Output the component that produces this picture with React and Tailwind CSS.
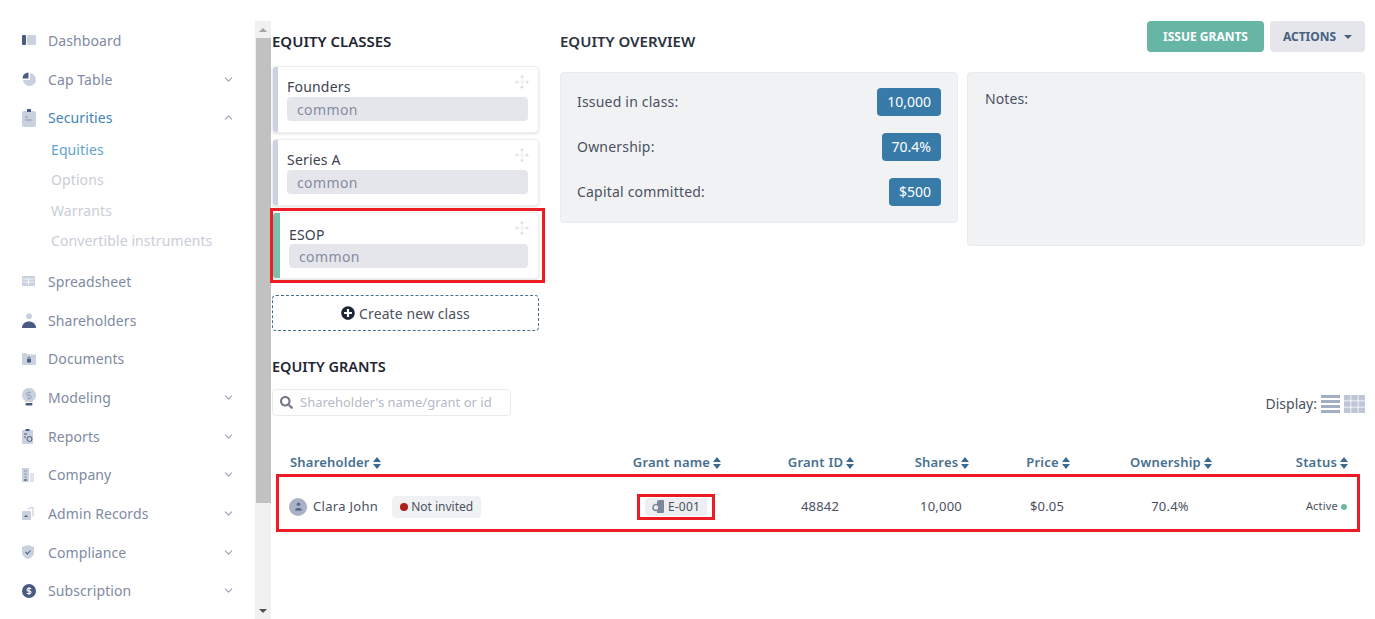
import { ChevronDown, ChevronUp, User } from 'lucide-react';
import { FaPlusCircle, FaSearch } from 'react-icons/fa';

const NAVY = '#4a5a82';
const LIGHT = '#c9d0de';

function DashboardIcon() {
  return (
    <svg width="14" height="10" viewBox="0 0 14 10">
      <rect x="0" y="0" width="4" height="10" rx="1" fill={NAVY} />
      <rect x="5" y="0" width="9" height="10" rx="1" fill={LIGHT} />
    </svg>
  );
}

function PieIcon() {
  return (
    <svg width="15" height="15" viewBox="0 0 15 15">
      <path d="M8 1a6.5 6.5 0 1 1-7 7h7z" fill={LIGHT} />
      <path d="M6.5 0.5v6H0.5a6 6 0 0 1 6-6z" fill={NAVY} />
    </svg>
  );
}

function ClipboardIcon() {
  return (
    <svg width="14" height="18" viewBox="0 0 14 18">
      <rect x="0" y="2" width="14" height="16" rx="2" fill={LIGHT} />
      <rect x="5" y="0" width="4" height="3" fill={NAVY} />
      <path d="M3 8h3M3 11h7" stroke="#8f9ab3" strokeWidth="1" />
    </svg>
  );
}

function SheetIcon() {
  return (
    <svg width="13" height="10" viewBox="0 0 13 10">
      <rect width="13" height="10" rx="1" fill={LIGHT} />
      <path d="M1 3h11M1 6h11M6.5 3v6" stroke="#fff" strokeWidth="0.8" />
    </svg>
  );
}

function PersonIcon() {
  return (
    <svg width="14" height="15" viewBox="0 0 14 15">
      <circle cx="7" cy="3.2" r="3" fill={LIGHT} />
      <path d="M0 15c0-4 3-6.5 7-6.5s7 2.500 7 6.500z" fill={NAVY} />
    </svg>
  );
}

function FolderIcon() {
  return (
    <svg width="14" height="12" viewBox="0 0 14 12">
      <path d="M0 1a1 1 0 0 1 1-1h3l1.500 1.500H13a1 1 0 0 1 1 1V11a1 1 0 0 1-1 1H1a1 1 0 0 1-1-1z" fill={LIGHT} />
      <rect x="5" y="6" width="4" height="3.500" rx="0.5" fill={NAVY} />
      <path d="M6 6V5a1 1 0 0 1 2 0v1" stroke={NAVY} fill="none" strokeWidth="0.8" />
    </svg>
  );
}

function BulbIcon() {
  return (
    <svg width="14" height="18" viewBox="0 0 14 18">
      <path d="M7 0a7 7 0 0 1 4 12.700V14H3v-1.300A7 7 0 0 1 7 0z" fill={LIGHT} />
      <rect x="3.500" y="15" width="7" height="2.500" rx="1" fill={NAVY} />
      <path d="M9 4.500H6a1.200 1.200 0 0 0 0 3h2a1.200 1.200 0 0 1 0 3H5M7 3v9" stroke="#97a2ba" strokeWidth="0.8" fill="none" />
    </svg>
  );
}

function ReportIcon() {
  return (
    <svg width="12" height="15" viewBox="0 0 12 15">
      <rect y="1" width="11" height="14" rx="1" fill={LIGHT} />
      <rect x="3.500" y="0" width="4" height="2" fill={NAVY} />
      <path d="M2 5h3M2 8h2" stroke={NAVY} strokeWidth="1" />
      <circle cx="7.500" cy="10" r="2.500" fill="none" stroke={NAVY} strokeWidth="1" />
    </svg>
  );
}

function BuildingIcon() {
  return (
    <svg width="12" height="14" viewBox="0 0 12 14">
      <rect x="0" y="0" width="7" height="14" fill={LIGHT} />
      <rect x="8" y="5" width="4" height="9" fill="#dfe3ec" />
      <path d="M2 3h3M2 6h3M2 9h3" stroke="#8f9ab3" strokeWidth="1" />
      <rect x="2.500" y="11" width="2" height="2" fill={NAVY} />
    </svg>
  );
}

function AdminIcon() {
  return (
    <svg width="12" height="13" viewBox="0 0 12 13">
      <path d="M7 2.500a4 1.500 0 0 1 4-2v9" stroke={LIGHT} fill="none" strokeWidth="1.200" />
      <rect x="0" y="4" width="9" height="9" rx="1" fill={LIGHT} />
      <path d="M2 10l2-2 2 2z" fill={NAVY} />
    </svg>
  );
}

function ShieldIcon() {
  return (
    <svg width="12" height="14" viewBox="0 0 12 14">
      <path d="M6 0l6 2v5c0 3.500-2.500 5.800-6 7-3.500-1.200-6-3.500-6-7V2z" fill={LIGHT} />
      <path d="M3.500 7l2 2 3-3.500" stroke={NAVY} fill="none" strokeWidth="1.100" />
    </svg>
  );
}

function DollarIcon() {
  return (
    <svg width="14" height="14" viewBox="0 0 14 14">
      <circle cx="7" cy="7" r="7" fill={NAVY} />
      <path d="M9.300 4.500H6a1.300 1.300 0 0 0 0 2.500h2a1.300 1.300 0 0 1 0 2.500H4.700M7 3v8" stroke="#fff" strokeWidth="1.100" fill="none" />
    </svg>
  );
}

function MoveIcon() {
  return (
    <svg width="14" height="14" viewBox="0 0 14 14" fill="#d5d9e2">
      <path d="M7 0l2 2.500H5zM7 14l-2-2.500h4zM0 7l2.500-2v4zM14 7l-2.500 2V5z" />
      <path d="M6.500 3h1v8h-1zM3 6.500h8v1H3z" opacity="0.5" />
    </svg>
  );
}

function SortIcon() {
  return (
    <svg width="8" height="12" viewBox="0 0 8 12" fill="#3a6a8f" className="ml-[3px]">
      <path d="M4 0l4 5H0zM4 12L0 7h8z" />
    </svg>
  );
}

function ListIcon() {
  return (
    <svg width="19" height="18" viewBox="0 0 19 18" fill="#a3aec3">
      <rect y="0" width="19" height="3" />
      <rect y="5" width="19" height="3" />
      <rect y="10" width="19" height="3" />
      <rect y="15" width="19" height="3" />
    </svg>
  );
}

function GridIcon() {
  return (
    <svg width="21" height="18" viewBox="0 0 21 18" fill="#bfc6d6">
      {[0, 7.25, 14.5].map((x) =>
        [0, 6.25, 12.5].map((y) => <rect key={`${x}-${y}`} x={x} y={y} width="6.5" height="5.5" rx="0.5" />)
      )}
    </svg>
  );
}

function GrantIcon() {
  return (
    <svg width="13" height="13" viewBox="0 0 13 13">
      <path d="M5 1l2-1h4a1 1 0 0 1 1 1v11a1 1 0 0 1-1 1H5z" fill="#7d8798" />
      <circle cx="4" cy="7.500" r="3" fill="#eceef1" stroke="#7d8798" strokeWidth="1.500" />
    </svg>
  );
}

const navTop = [
  { label: 'Dashboard', icon: <DashboardIcon /> },
  { label: 'Cap Table', icon: <PieIcon />, chevron: 'down' },
  { label: 'Securities', icon: <ClipboardIcon />, chevron: 'up', active: true },
];

const subNav = ['Equities', 'Options', 'Warrants', 'Convertible instruments'];

const navBottom = [
  { label: 'Spreadsheet', icon: <SheetIcon /> },
  { label: 'Shareholders', icon: <PersonIcon /> },
  { label: 'Documents', icon: <FolderIcon /> },
  { label: 'Modeling', icon: <BulbIcon />, chevron: 'down' },
  { label: 'Reports', icon: <ReportIcon />, chevron: 'down' },
  { label: 'Company', icon: <BuildingIcon />, chevron: 'down' },
  { label: 'Admin Records', icon: <AdminIcon />, chevron: 'down' },
  { label: 'Compliance', icon: <ShieldIcon />, chevron: 'down' },
  { label: 'Subscription', icon: <DollarIcon />, chevron: 'down' },
];

function NavRow({ item }) {
  return (
    <div className="flex h-[38.7px] items-center pl-[22px] pr-[20px]">
      <span className="flex w-[26px] shrink-0 items-center">{item.icon}</span>
      <span className={`flex-1 text-[14px] tracking-[0.1px] ${item.active ? 'text-[#3f85b5]' : 'text-[#7f8aa3]'}`}>
        {item.label}
      </span>
      {item.chevron === 'down' && <ChevronDown size={13} className="text-[#9aa3b5]" />}
      {item.chevron === 'up' && <ChevronUp size={13} className="text-[#9aa3b5]" />}
    </div>
  );
}

function ClassCard({ name, active }) {
  return (
    <div className="relative flex h-[67px] overflow-hidden rounded border border-[#eceef2] bg-white shadow-sm">
      <div className={`h-full shrink-0 ${active ? 'w-[7px] bg-[#7cc0ae]' : 'w-[5px] bg-[#ccd2de]'}`} />
      <div className={`flex-1 pr-[10px] ${active ? 'pl-[9px] pt-[13px]' : 'pl-[9px] pt-[11px]'}`}>
        <div className="text-[14px] leading-[17px] tracking-[0.2px] text-[#3c4250]">{name}</div>
        <div className={`flex h-[24px] items-center rounded bg-[#e4e6ec] px-[10px] text-[14px] tracking-[0.4px] text-[#858ca0] ${active ? 'mt-[1px]' : 'mt-[2px]'}`}>
          common
        </div>
      </div>
      <div className="absolute right-[9px] top-[8px]">
        <MoveIcon />
      </div>
    </div>
  );
}

function StatRow({ label, value }) {
  return (
    <div className="flex h-[45px] items-center justify-between">
      <span className="text-[14px] tracking-[0.2px] text-[#4b5160]">{label}</span>
      <span className="flex h-[28px] items-center rounded bg-[#387aa8] px-[10px] text-[14px] text-white">{value}</span>
    </div>
  );
}

const gridCols = 'grid grid-cols-[311px_152px_136px_106px_106px_140px_107px] items-center';

function Th({ children, className = 'justify-center' }) {
  return (
    <div className={`flex items-center text-[13px] font-semibold tracking-[0.2px] text-[#47708f] ${className}`}>
      {children}
      <SortIcon />
    </div>
  );
}

export default function App() {
  return (
    <div
      className="flex h-[619px] w-[1375px] overflow-hidden bg-white"
      style={{ fontFamily: '"Noto Sans", "Open Sans", sans-serif' }}
    >
      <aside className="w-[255px] shrink-0 pt-[21px]">
        {navTop.map((item) => (
          <NavRow key={item.label} item={item} />
        ))}
        <div className="-mt-[3px] mb-[6px] pl-[51px]">
          {subNav.map((s, i) => (
            <div
              key={s}
              className={`flex h-[30.500px] items-center text-[14px] tracking-[0.1px] ${i === 0 ? 'text-[#62a3cc]' : 'text-[#c9cdd7]'}`}
            >
              {s}
            </div>
          ))}
        </div>
        {navBottom.map((item) => (
          <NavRow key={item.label} item={item} />
        ))}
      </aside>

      <div className="flex w-[16px] shrink-0 flex-col pt-[21px]">
        <div className="flex h-[17px] items-center justify-center bg-[#f1f1f1]">
          <div className="h-0 w-0 border-x-[4px] border-b-[4px] border-x-transparent border-b-[#a3a3a3]" />
        </div>
        <div className="h-[465px] bg-[#f1f1f1] pl-[1px]">
          <div className="h-full bg-[#c1c1c1]" />
        </div>
        <div className="flex-1 bg-[#f1f1f1]" />
        <div className="flex h-[17px] items-center justify-center bg-[#f1f1f1]">
          <div className="h-0 w-0 border-x-[4px] border-t-[4px] border-x-transparent border-t-[#505050]" />
        </div>
      </div>

      <main className="min-w-0 flex-1 pr-[10px] pt-[21px]">
        <div className="flex gap-[22px]">
          <section className="ml-[1px] w-[267px] shrink-0">
            <h2 className="mb-[15px] mt-[10px] text-[15px] font-semibold leading-[20px] text-[#1f2633]">EQUITY CLASSES</h2>
            <div className="flex flex-col gap-[6px]">
              <ClassCard name="Founders" />
              <ClassCard name="Series A" />
              <div className="relative">
                <ClassCard name="ESOP" active />
                <div className="pointer-events-none absolute -bottom-[4px] -left-[2px] -right-[6px] -top-[4px] border-[3px] border-[#ed1c24]" />
              </div>
            </div>
            <div className="mt-[16px] flex h-[36px] items-center justify-center gap-[4px] rounded border border-dashed border-[#47708f] text-[14px] tracking-[0.1px] text-[#4b5160]">
              <FaPlusCircle size={14} className="text-[#1f2633]" />
              Create new class
            </div>
          </section>

          <section className="-ml-[1px] min-w-0 flex-1">
            <div className="flex h-[30px] items-start justify-between">
              <h2 className="mt-[10px] text-[15px] font-semibold leading-[20px] text-[#2b3240]">EQUITY OVERVIEW</h2>
              <div className="flex gap-[6px]">
                <button type="button" className="flex h-[31px] w-[117px] items-center justify-center rounded bg-[#66b5a5] text-[12px] font-bold text-white">
                  ISSUE GRANTS
                </button>
                <button type="button" className="flex h-[31px] w-[95px] items-center justify-center gap-[8px] rounded bg-[#e4e6ec] text-[12px] font-bold text-[#47607f]">
                  ACTIONS
                  <span className="h-0 w-0 border-x-[4px] border-t-[4px] border-x-transparent border-t-[#47607f]" />
                </button>
              </div>
            </div>
            <div className="mt-[21px] flex items-start gap-[9px]">
              <div className="h-[151px] w-[398px] rounded border border-[#e9ebef] bg-[#f1f2f4] px-[16px] pt-[6px]">
                <StatRow label="Issued in class:" value="10,000" />
                <StatRow label="Ownership:" value="70.4%" />
                <StatRow label="Capital committed:" value="$500" />
              </div>
              <div className="h-[174px] flex-1 rounded border border-[#e9ebef] bg-[#f1f2f4] px-[17px] pt-[16px] text-[14px] leading-[20px] tracking-[0.1px] text-[#4b5160]">
                Notes:
              </div>
            </div>
          </section>
        </div>

        <div className="pl-[1px]">
          <h2 className="mt-[25px] text-[14.500px] font-semibold leading-[20px] text-[#1f2633]">EQUITY GRANTS</h2>
          <div className="mt-[13px] flex items-start justify-between">
            <div className="flex h-[27px] w-[239px] items-center gap-[7px] rounded border border-[#e9ebef] px-[7px] text-[13px] text-[#b3bac7]">
              <FaSearch size={13} className="text-[#717785]" />
              Shareholder's name/grant or id
            </div>
            <div className="mt-[4px] flex items-center gap-[4px] text-[14px] text-[#4b5160]">
              Display:
              <ListIcon />
              <GridIcon />
            </div>
          </div>

          <div className={`${gridCols} mt-[37px] h-[20px] pl-[18px]`}>
            <Th className="justify-start">Shareholder</Th>
            <Th>Grant name</Th>
            <Th>Grant ID</Th>
            <Th>Shares</Th>
            <Th>Price</Th>
            <Th>Ownership</Th>
            <Th className="justify-end">Status</Th>
          </div>

          <div className={`${gridCols} ml-[4px] mt-[1px] h-[58px] w-[1084px] border-[3px] border-[#ed1c24] pl-[10px] pt-[7px] text-[13px] tracking-[0.2px] text-[#4b5160]`}>
            <div className="flex items-center">
              <span className="flex h-[18px] w-[18px] items-center justify-center rounded-full bg-[#aab2c6]">
                <User size={11} fill="#5c6a8c" strokeWidth={0} />
              </span>
              <span className="ml-[6px] text-[13px] tracking-[0.3px]">Clara John</span>
              <span className="ml-[14px] flex h-[22px] items-center gap-[3px] rounded bg-[#f0f1f3] px-[8px] text-[12px] tracking-[0px]">
                <span className="h-[8px] w-[8px] rounded-full bg-[#b01c1c]" />
                Not invited
              </span>
            </div>
            <div className="flex justify-center">
              <div className="flex h-[26px] w-[78px] items-center justify-center border-[3px] border-[#ed1c24]">
                <span className="flex h-[18px] items-center gap-[3px] rounded bg-[#eceef1] px-[7px] text-[12px]">
                  <GrantIcon />
                  E-001
                </span>
              </div>
            </div>
            <div className="text-center">48842</div>
            <div className="text-center">10,000</div>
            <div className="text-center">$0.05</div>
            <div className="text-center">70.4%</div>
            <div className="flex items-center justify-end gap-[3px] text-[11px]">
              Active
              <span className="h-[6px] w-[6px] rounded-full bg-[#6fb8a6]" />
            </div>
          </div>
        </div>
      </main>
    </div>
  );
}
